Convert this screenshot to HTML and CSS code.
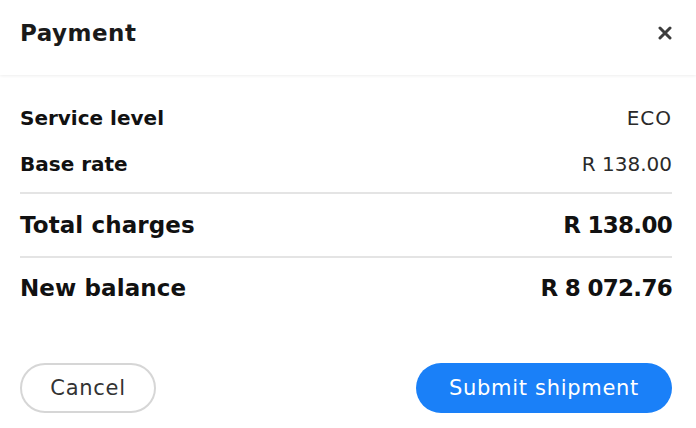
FILE: index.html
```html
<!DOCTYPE html>
<html>
<head>
    <title>Payment</title>
    <link rel="stylesheet" href="styles.css">
</head>
<body>
    <div class="modal">
        <div class="modal-header">
            <h1>Payment</h1>
            <button class="close" aria-label="Close">
                <svg width="14" height="14" viewBox="0 0 14 14">
                    <path d="M2 2 L12 12 M12 2 L2 12" stroke="#3d3d3d" stroke-width="3" stroke-linecap="round"/>
                </svg>
            </button>
        </div>

        <div class="modal-body">
            <div class="row small">
                <span class="label">Service level</span>
                <span class="value">ECO</span>
            </div>
            <div class="row small">
                <span class="label">Base rate</span>
                <span class="value">R 138.00</span>
            </div>
            <div class="row big divided">
                <span class="label">Total charges</span>
                <span class="value">R 138.00</span>
            </div>
            <div class="row big divided">
                <span class="label">New balance</span>
                <span class="value">R 8 072.76</span>
            </div>
        </div>

        <div class="modal-footer">
            <button class="btn btn-cancel">Cancel</button>
            <button class="btn btn-submit">Submit shipment</button>
        </div>
    </div>
</body>
</html>
```

FILE: styles.css
```css
body {
    margin: 0;
    background-color: #ffffff;
    color: #111111;
    font-family: "DejaVu Sans", sans-serif;
}

.modal {
    width: 696px;
    height: 428px;
}

.modal-header {
    box-sizing: border-box;
    height: 75px;
    padding: 19px 24px 0 20px;
    display: flex;
    align-items: flex-start;
    justify-content: space-between;
    box-shadow: 0 1px 3px rgba(0, 0, 0, 0.07);
}
.modal-header h1 {
    margin: 0;
    font-size: 23px;
    line-height: 28px;
    font-weight: 600;
    color: #1a1a1a;
    letter-spacing: 0.5px;
}
.close {
    background: none;
    border: none;
    padding: 0;
    margin-top: 7px;
    width: 14px;
    height: 14px;
    cursor: pointer;
}

.modal-body {
    padding: 20px 24px 0 20px;
}
.row {
    display: flex;
    justify-content: space-between;
    align-items: center;
}
.row.small {
    height: 46px;
    font-size: 20px;
}
.row.small .label {
    font-weight: 700;
}
.row.small .value {
    color: #2a2a2a;
}
.row.small:first-child .value {
    letter-spacing: 1px;
}
.row.small + .row.big {
    margin-top: 5px;
}
.row.big {
    height: 62px;
    font-size: 23px;
    font-weight: 700;
}
.row.big .label {
    letter-spacing: 0.1px;
}
.row.big .value {
    letter-spacing: -0.7px;
}
.row.big + .row.big {
    height: 60px;
}
.row.divided {
    border-top: 2px solid #e4e4e4;
}

.modal-footer {
    display: flex;
    justify-content: space-between;
    padding: 45px 24px 0 20px;
}
.btn {
    height: 50px;
    border-radius: 25px;
    font-family: "DejaVu Sans", sans-serif;
    font-size: 21px;
    letter-spacing: 0.7px;
    cursor: pointer;
}
.btn-cancel {
    width: 136px;
    background-color: #ffffff;
    border: 2px solid #d6d6d6;
    color: #333333;
}
.btn-submit {
    width: 256px;
    background-color: #1a80f8;
    border: none;
    color: #ffffff;
}
```
